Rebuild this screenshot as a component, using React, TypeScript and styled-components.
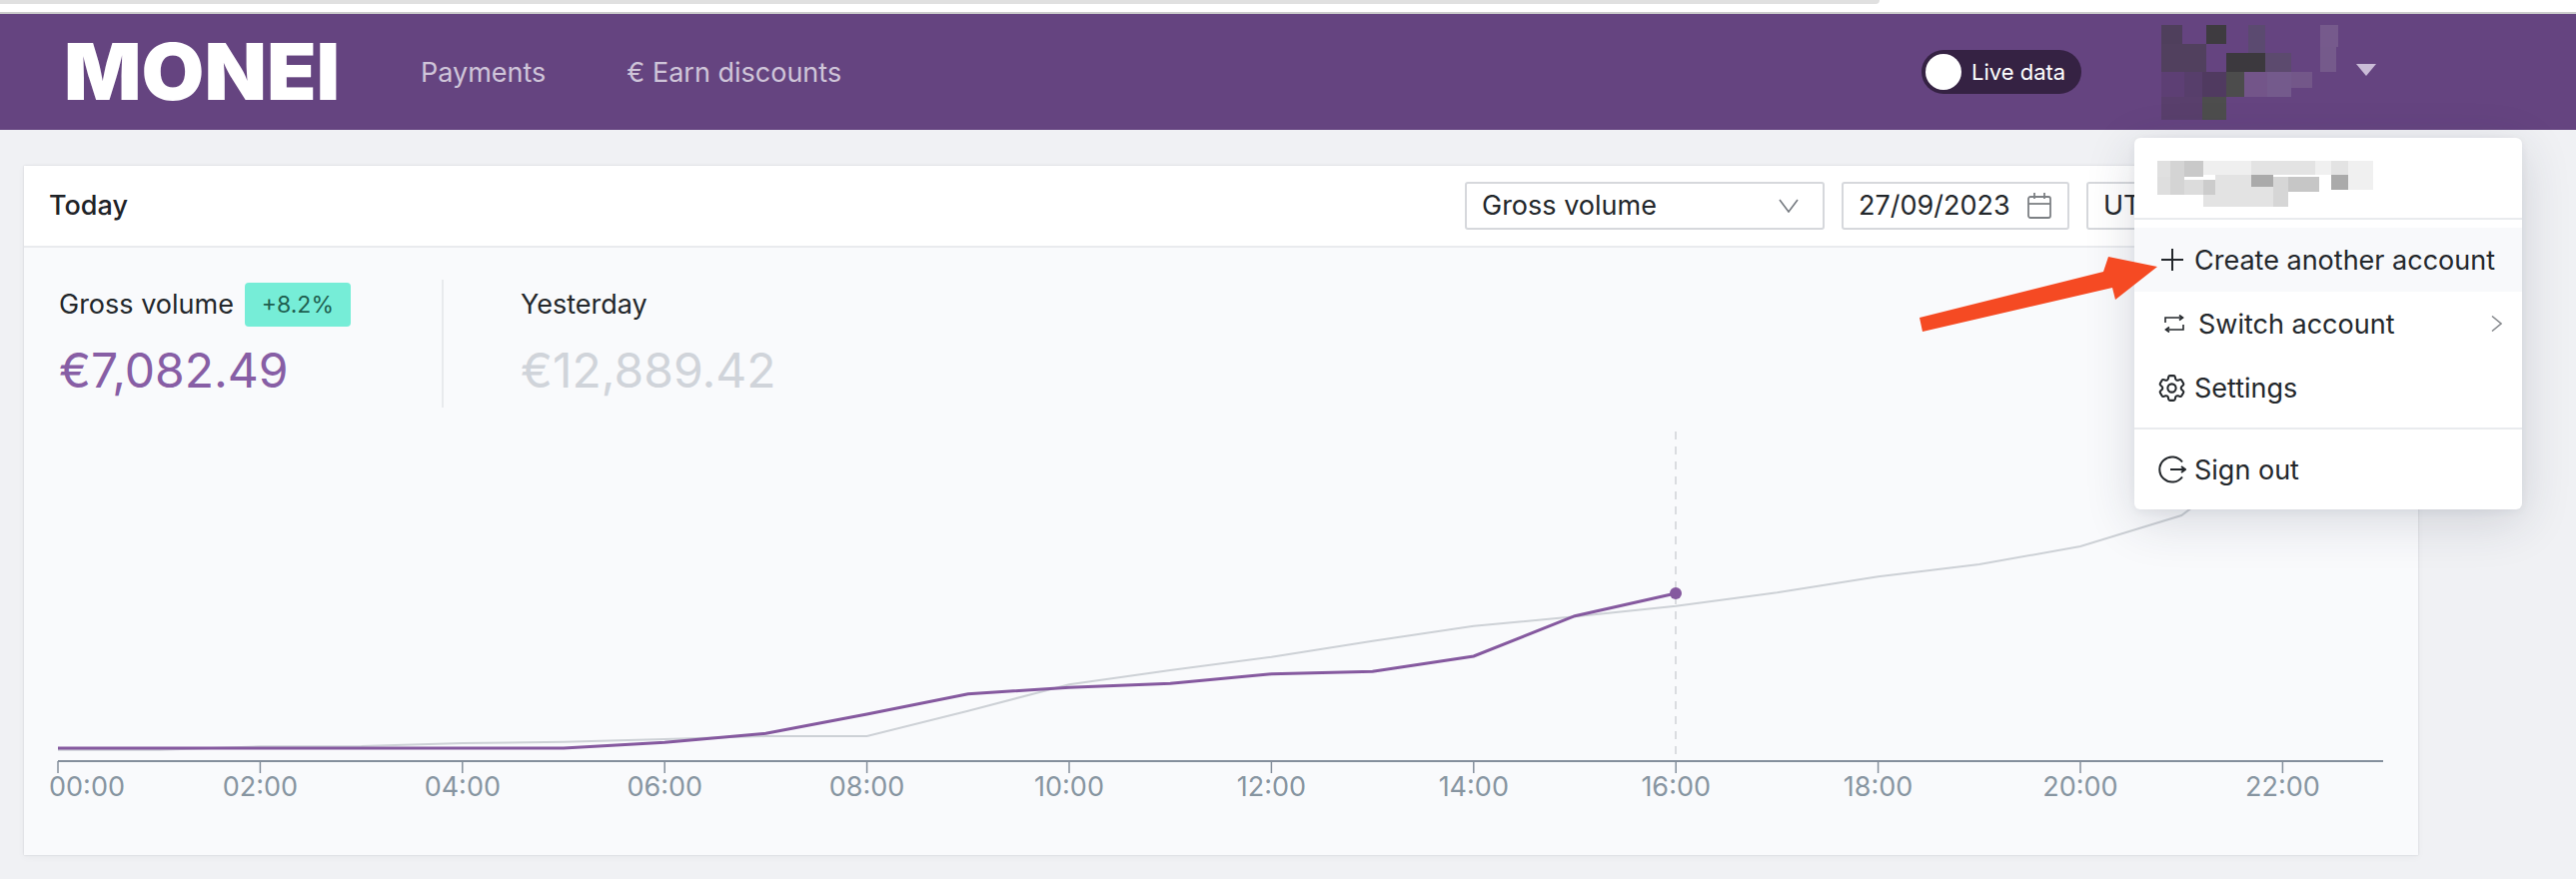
import styled, { createGlobalStyle } from "styled-components";
import { HiOutlineCog6Tooth } from "react-icons/hi2";

const GlobalStyle = createGlobalStyle`
  html, body {
    margin: 0;
    padding: 0;
    background: #f0f1f4;
    font-family: Inter, "Liberation Sans", sans-serif;
  }
`;

type Block = [number, number, number, number, string];

// mosaic blocks over the account name, in px from the mosaic's top left
const headerBlocks: Block[] = [
  [0, 0, 21, 19, "#4f3f5c"],
  [45, 0, 20, 19, "#3e3b40"],
  [87, 0, 17, 28, "#5b4a70"],
  [159, 0, 18, 22, "#765a8c"],
  [159, 22, 16, 25, "#755a8b"],
  [0, 19, 45, 28, "#51405e"],
  [65, 28, 39, 19, "#3c393e"],
  [104, 28, 26, 19, "#5c4a6e"],
  [0, 47, 23, 25, "#5d3f74"],
  [23, 47, 18, 25, "#573e6b"],
  [41, 47, 24, 25, "#503a60"],
  [65, 47, 18, 25, "#4c4c4c"],
  [83, 47, 23, 25, "#735589"],
  [106, 47, 24, 25, "#745a8c"],
  [130, 47, 21, 16, "#735789"],
  [0, 72, 41, 23, "#593f6c"],
  [41, 72, 24, 23, "#4d4d4d"],
];

const menuBlocks: Block[] = [
  [0, 0, 13, 16, "#e0e0e0"],
  [13, 0, 14, 16, "#d4d4d4"],
  [27, 0, 19, 16, "#c9c9c9"],
  [46, 0, 48, 14, "#efefef"],
  [94, 0, 64, 14, "#e3e3e3"],
  [158, 0, 16, 14, "#f0f0f0"],
  [174, 0, 17, 14, "#e3e3e3"],
  [191, 0, 25, 29, "#f0f0f0"],
  [0, 16, 13, 18, "#dedede"],
  [13, 16, 14, 18, "#d4d4d4"],
  [27, 19, 19, 15, "#dcdcdc"],
  [46, 19, 12, 15, "#cccccc"],
  [58, 14, 36, 32, "#e3e3e3"],
  [46, 34, 12, 12, "#e3e3e3"],
  [94, 14, 22, 12, "#aaaaaa"],
  [94, 26, 22, 20, "#e3e3e3"],
  [116, 16, 15, 30, "#d6d6d6"],
  [131, 16, 31, 15, "#c6c6c6"],
  [174, 14, 17, 15, "#aaaaaa"],
];

const hourX = (hour: number) => 58 + hour * 101.2;

const todaySeries = [749, 749, 749, 749, 749, 749, 743.3, 734.3, 715, 694.7, 688.3, 684.3, 674.7, 672.3, 657, 616.7, 594];
const yesterdaySeries = [
  750.7, 750.7, 747.3, 747, 744, 742.7, 740, 737, 737, 711.7, 685.3, 671, 657.7, 641.7, 626.7, 617.3, 606.7, 593.3, 577.3,
  565, 547, 516, 440, 380,
];

const toPoints = (series: number[]) => series.map((y, hour) => `${hourX(hour)},${y}`).join(" ");

const tickHours = [0, 2, 4, 6, 8, 10, 12, 14, 16, 18, 20, 22];

function Mosaic({ blocks, width, height }: { blocks: Block[]; width: number; height: number }) {
  return (
    <svg width={width} height={height} viewBox={`0 0 ${width} ${height}`} style={{ display: "block" }}>
      {blocks.map(([x, y, w, h, fill], i) => (
        <rect key={i} x={x} y={y} width={w} height={h} fill={fill} />
      ))}
    </svg>
  );
}

function SalesChart() {
  return (
    <ChartSvg viewBox="24 420 2396 436" width={2396} height={436}>
      <line x1={1677} y1={432} x2={1677} y2={762} stroke="#cfd2d6" strokeWidth={1.5} strokeDasharray="8 7" />
      <polyline points={toPoints(yesterdaySeries)} fill="none" stroke="#cdd1d6" strokeWidth={2} />
      <polyline points={toPoints(todaySeries)} fill="none" stroke="#85599f" strokeWidth={3} />
      <circle cx={1677} cy={594} r={6} fill="#85599f" />
      <line x1={58} y1={762} x2={2385} y2={762} stroke="#848f9c" strokeWidth={2} />
      {tickHours.map((hour) => (
        <g key={hour}>
          <line x1={hourX(hour)} y1={762} x2={hourX(hour)} y2={774} stroke="#848f9c" strokeWidth={1.5} />
          <AxisLabel x={hour === 0 ? 87 : hourX(hour)} y={797} textAnchor="middle">
            {String(hour).padStart(2, "0")}:00
          </AxisLabel>
        </g>
      ))}
    </ChartSvg>
  );
}

export default function App() {
  return (
    <Page>
      <GlobalStyle />
      <BrowserEdge>
        <UrlBar />
      </BrowserEdge>
      <TopBar>
        <LogoBox>
          <Logo>MONEI</Logo>
        </LogoBox>
        <NavLink>Payments</NavLink>
        <NavLink>€ Earn discounts</NavLink>
        <TopBarRight>
          <LiveToggle>
            <Knob />
            Live data
          </LiveToggle>
          <AccountName>
            <Mosaic blocks={headerBlocks} width={177} height={95} />
            <Caret />
          </AccountName>
        </TopBarRight>
      </TopBar>
      <Main>
        <Card>
          <CardHeader>
            <CardTitle>Today</CardTitle>
            <Filters>
              <Field $width={360}>
                <FieldText>Gross volume</FieldText>
                <FieldChevron width="20" height="14" viewBox="0 0 20 14" fill="none" stroke="#757a80" strokeWidth="1.6">
                  <polyline points="1,1 10,13 19,1" />
                </FieldChevron>
              </Field>
              <Field $width={228}>
                <FieldText>27/09/2023</FieldText>
                <svg width="24" height="26" viewBox="0 0 24 26" fill="none" stroke="#7d8084" strokeWidth="1.8">
                  <rect x="1" y="4" width="22" height="21" rx="2" />
                  <line x1="1" y1="11" x2="23" y2="11" />
                  <line x1="7" y1="0" x2="7" y2="6" />
                  <line x1="17" y1="0" x2="17" y2="6" />
                </svg>
              </Field>
              <Field $width={307}>
                <FieldText>UTC</FieldText>
              </Field>
            </Filters>
          </CardHeader>
          <CardBody>
            <Stats>
              <Stat $width={420} $pad={35} $divided>
                <StatLabel>
                  Gross volume
                  <Badge>+8.2%</Badge>
                </StatLabel>
                <StatValue>€7,082.49</StatValue>
              </Stat>
              <Stat $width={400} $pad={77}>
                <StatLabel>Yesterday</StatLabel>
                <StatValue $muted>€12,889.42</StatValue>
              </Stat>
            </Stats>
            <SalesChart />
          </CardBody>
        </Card>
      </Main>

      <Menu>
        <MenuHead>
          <Mosaic blocks={menuBlocks} width={216} height={46} />
        </MenuHead>
        <MenuGroup>
          <MenuItem $active>
            <IconSlot>
              <svg width="24" height="24" viewBox="0 0 24 24" fill="none" stroke="#23272b" strokeWidth="2">
                <line x1="12" y1="1" x2="12" y2="23" />
                <line x1="1" y1="12" x2="23" y2="12" />
              </svg>
            </IconSlot>
            Create another account
          </MenuItem>
          <MenuItem>
            <IconSlot $wide>
              <svg width="20" height="18" viewBox="0 0 20 18" fill="none" stroke="#23272b" strokeWidth="1.6">
                <path d="M1 8 V3 H18" />
                <path d="M15 0.5 L18.5 3 L15 5.5" />
                <path d="M19 10 V15 H2" />
                <path d="M5 12.5 L1.5 15 L5 17.5" />
              </svg>
            </IconSlot>
            Switch account
            <SubArrow>
              <svg width="11" height="16" viewBox="0 0 11 16" fill="none" stroke="#85888c" strokeWidth="1.5">
                <polyline points="1,0.5 10,8 1,15.5" />
              </svg>
            </SubArrow>
          </MenuItem>
          <MenuItem>
            <IconSlot>
              <HiOutlineCog6Tooth size={33} color="#23272b" />
            </IconSlot>
            Settings
          </MenuItem>
        </MenuGroup>
        <MenuGroup>
          <MenuItem>
            <IconSlot>
              <svg width="28" height="28" viewBox="0 0 28 28" fill="none" stroke="#23272b" strokeWidth="2">
                <path d="M24 6.5 A12.6 12.6 0 1 0 24 21.5" />
                <line x1="12" y1="14" x2="26" y2="14" />
                <polyline points="23,11 27,14 23,17" />
              </svg>
            </IconSlot>
            Sign out
          </MenuItem>
        </MenuGroup>
      </Menu>

      <Arrow viewBox="0 0 240 76" width={240} height={76}>
        <polygon points="1,61 185,15 190,0 239,10 197,43 194,31 4,75" fill="#f54a23" />
      </Arrow>
    </Page>
  );
}

const Page = styled.div`
  position: relative;
  width: 2578px;
  height: 880px;
  overflow: hidden;
  background: #f0f1f4;
`;

const BrowserEdge = styled.div`
  box-sizing: border-box;
  height: 14px;
  background: #fff;
  border-bottom: 2px solid #cbcbcb;
`;

const UrlBar = styled.div`
  width: 1881px;
  height: 4px;
  background: #e0e0e0;
  border-bottom-right-radius: 4px;
`;

const TopBar = styled.header`
  display: flex;
  align-items: center;
  height: 116px;
  padding: 0 200px 0 64px;
  background: #654480;
`;

const LogoBox = styled.div`
  width: 357px;
`;

const Logo = styled.div`
  display: inline-block;
  color: #fff;
  font-size: 78px;
  font-weight: 900;
  line-height: 1;
  transform: scaleX(1.04);
  transform-origin: left center;
`;

const NavLink = styled.a`
  margin-right: 81px;
  color: #cfc5d9;
  font-size: 27px;
`;

const TopBarRight = styled.div`
  display: flex;
  align-items: center;
  margin-left: auto;
`;

const LiveToggle = styled.div`
  box-sizing: border-box;
  display: flex;
  align-items: center;
  gap: 10px;
  width: 160px;
  height: 44px;
  padding-left: 4px;
  border-radius: 22px;
  background: #352243;
  color: #fff;
  font-size: 22px;
`;

const Knob = styled.span`
  width: 36px;
  height: 36px;
  border-radius: 50%;
  background: #fff;
`;

const AccountName = styled.div`
  display: flex;
  align-items: center;
  gap: 18px;
  margin-left: 80px;
`;

const Caret = styled.span`
  width: 0;
  height: 0;
  margin-top: -4px;
  border-left: 10px solid transparent;
  border-right: 10px solid transparent;
  border-top: 12px solid #cabcd7;
`;

const Main = styled.main`
  padding: 36px 158px 0 24px;
`;

const Card = styled.section`
  width: 2396px;
  height: 690px;
  background: #f9fafc;
  box-shadow: 0 0 2px rgba(30, 40, 60, 0.14), 0 2px 8px rgba(30, 40, 60, 0.04);
`;

const CardHeader = styled.div`
  box-sizing: border-box;
  display: flex;
  align-items: center;
  justify-content: space-between;
  height: 82px;
  padding: 0 25px;
  background: #fff;
  border-bottom: 2px solid #e9ebee;
`;

const CardTitle = styled.h2`
  margin: 0 0 2px;
  color: #1f2328;
  font-size: 27px;
  font-weight: 500;
`;

const Filters = styled.div`
  display: flex;
  gap: 17px;
`;

const Field = styled.div<{ $width: number }>`
  box-sizing: border-box;
  display: flex;
  align-items: center;
  justify-content: space-between;
  width: ${(p) => p.$width}px;
  height: 48px;
  padding: 0 16px 0 15px;
  border: 2px solid #d6d8dc;
  border-radius: 3px;
  color: #23272b;
  font-size: 27px;
`;

const FieldText = styled.span`
  margin-top: -2px;
`;

const FieldChevron = styled.svg`
  margin-right: 8px;
`;

const CardBody = styled.div`
  display: flex;
  flex-direction: column;
`;

const Stats = styled.div`
  display: flex;
  height: 128px;
  margin: 32px 0 12px;
`;

const Stat = styled.div<{ $width: number; $pad: number; $divided?: boolean }>`
  box-sizing: border-box;
  display: flex;
  flex-direction: column;
  gap: 17px;
  width: ${(p) => p.$width}px;
  padding: 2px 0 0 ${(p) => p.$pad}px;
  border-right: ${(p) => (p.$divided ? "2px solid #e8eaed" : "none")};
`;

const StatLabel = styled.div`
  display: flex;
  align-items: center;
  gap: 11px;
  height: 44px;
  color: #23272b;
  font-size: 27px;
`;

const Badge = styled.span`
  display: flex;
  align-items: center;
  justify-content: center;
  width: 106px;
  height: 44px;
  margin-top: 2px;
  border-radius: 4px;
  background: #76edd7;
  color: #1e5f50;
  font-size: 23px;
`;

const StatValue = styled.div<{ $muted?: boolean }>`
  color: ${(p) => (p.$muted ? "#d0d4da" : "#875ea5")};
  font-size: 48px;
  line-height: 56px;
`;

const ChartSvg = styled.svg`
  display: block;
`;

const AxisLabel = styled.text`
  fill: #8795a1;
  font-family: Inter, "Liberation Sans", sans-serif;
  font-size: 27px;
`;

const Menu = styled.div`
  position: absolute;
  top: 138px;
  left: 2136px;
  width: 388px;
  height: 372px;
  border-radius: 6px;
  background: #fff;
  box-shadow: 0 12px 50px rgba(40, 45, 70, 0.16), 0 2px 8px rgba(40, 45, 70, 0.06);
  color: #23272b;
  font-size: 27px;
`;

const MenuHead = styled.div`
  box-sizing: border-box;
  height: 82px;
  padding: 23px 0 0 23px;
  border-bottom: 2px solid #e9ebee;
`;

const MenuGroup = styled.div`
  padding: 8px 0;

  & + & {
    border-top: 2px solid #e9ebee;
  }
`;

const MenuItem = styled.div<{ $active?: boolean }>`
  display: flex;
  align-items: center;
  height: 64px;
  padding-left: 24px;
  background: ${(p) => (p.$active ? "#f8f9fb" : "transparent")};
`;

const IconSlot = styled.span<{ $wide?: boolean }>`
  display: flex;
  align-items: center;
  justify-content: center;
  width: ${(p) => (p.$wide ? 41 : 37)}px;
  margin-left: -1px;
  padding-right: 8px;
  box-sizing: border-box;

  svg {
    flex-shrink: 0;
  }
`;

const SubArrow = styled.span`
  display: flex;
  margin-left: auto;
  margin-right: 20px;
`;

const Arrow = styled.svg`
  position: absolute;
  top: 257px;
  left: 1920px;
`;
